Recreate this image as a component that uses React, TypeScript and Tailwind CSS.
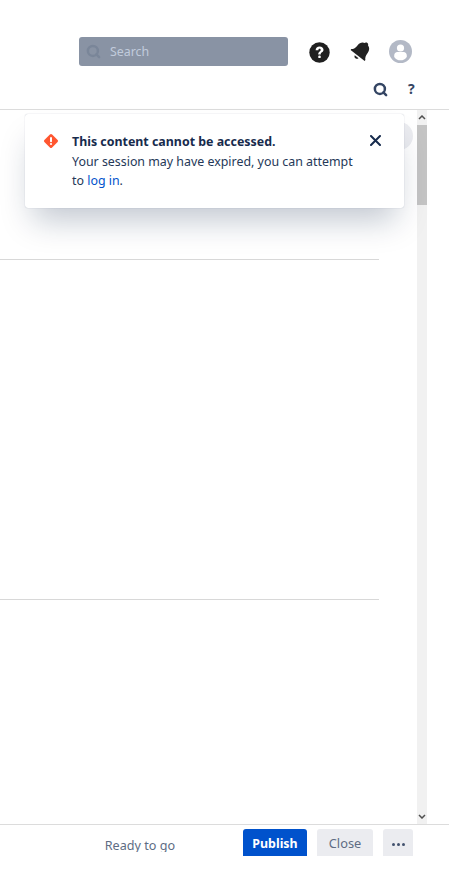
import { Search } from 'lucide-react';

function HelpIcon() {
  return (
    <svg width="21" height="21" viewBox="0 0 21 21">
      <circle cx="10.5" cy="10.5" r="10.2" fill="#1f1f1f" />
      <path d="M6.6 8.2c0-2.4 1.6-3.8 4-3.8s3.9 1.3 3.9 3.3c0 1.5-.8 2.2-1.8 2.9-.7.5-1 .9-1 1.8H9.2c0-1.6.5-2.3 1.5-3 .7-.5 1-.9 1-1.5 0-.7-.5-1.1-1.1-1.1-.7 0-1.2.5-1.2 1.4z" fill="#fff" />
      <rect x="9.2" y="13.5" width="2.6" height="2.6" rx="1.2" fill="#fff" />
    </svg>
  );
}

function BellIcon() {
  return (
    <svg width="24" height="24" viewBox="0 0 24 24">
      <g transform="rotate(38 12 12) translate(-1.5 -1.5) scale(1.13)" fill="#222">
        <path d="M11.5 2.2c.9 0 1.5.5 1.7 1.3 2.6.7 3.9 2.8 3.9 5.5 0 3 .7 4.8 2.3 6.2v1H3.6v-1c1.6-1.4 2.3-3.2 2.3-6.2 0-2.7 1.3-4.8 3.9-5.5.2-.8.8-1.3 1.7-1.3z" />
        <path d="M9.4 17.6h4.2c-.2 1.1-1 1.8-2.1 1.8s-1.9-.7-2.1-1.8z" />
      </g>
    </svg>
  );
}

function AvatarIcon() {
  return (
    <svg width="23" height="23" viewBox="0 0 23 23">
      <circle cx="11.5" cy="11.5" r="11.5" fill="#b3b9c6" />
      <circle cx="11.5" cy="8" r="3.6" fill="#fff" />
      <path d="M5.2 15.5c0-2 1.4-3.4 3.2-3.4h6.2c1.8 0 3.2 1.4 3.2 3.4v1.4c-1.5 2.2-3.6 3.4-6.3 3.4s-4.8-1.2-6.3-3.4z" fill="#fff" />
    </svg>
  );
}

function ErrorIcon() {
  return (
    <svg width="16" height="16" viewBox="0 0 16 16">
      <path d="M6.9 1.4a1.6 1.6 0 0 1 2.2 0l5.5 5.5a1.6 1.6 0 0 1 0 2.2l-5.5 5.5a1.6 1.6 0 0 1-2.2 0L1.4 9.1a1.6 1.6 0 0 1 0-2.2z" fill="#ff5630" />
      <rect x="7" y="4" width="2" height="5.2" rx="1" fill="#fff" />
      <circle cx="8" cy="11" r="1.1" fill="#fff" />
    </svg>
  );
}

function CloseIcon() {
  return (
    <svg width="11" height="11" viewBox="0 0 11 11">
      <path d="M1 1l9 9M10 1l-9 9" stroke="#172b4d" strokeWidth="2" strokeLinecap="round" />
    </svg>
  );
}

export default function App() {
  return (
    <div className="flex h-[875px] w-[449px] flex-col overflow-hidden bg-white font-['Noto_Sans',sans-serif] text-[12.4px] text-[#172b4d]">
      {/* top bar */}
      <div className="h-[110px] shrink-0 border-b border-[#dcdcdc]">
        <div className="flex h-[79px] items-end pb-[13px] pl-[79px]">
          <div className="flex h-[29px] w-[209px] items-center rounded-[3px] bg-[#8993a4] pl-[7px]">
            <Search size={15} strokeWidth={4} className="text-[#7a8699]" />
            <span className="ml-[9px] pt-[2px] text-[12.4px] text-[#c1cbdc]">Search</span>
          </div>
          <div className="ml-[21px] mb-[3px]"><HelpIcon /></div>
          <div className="ml-[19px] mb-[2px]"><BellIcon /></div>
          <div className="ml-[16px] mb-[3px]"><AvatarIcon /></div>
        </div>
        <div className="flex items-center pl-[373px]">
          <Search size={15} strokeWidth={4} className="text-[#344563]" />
          <span className="ml-[20px] text-[14px] font-bold leading-[20px] text-[#344563]">?</span>
        </div>
      </div>

      {/* content */}
      <div className="relative flex min-h-0 flex-1">
        <div className="w-[417px]">
          <div className="mt-[149px] w-[379px] border-t border-[#d8d8d8]" />
          <div className="mt-[339px] w-[379px] border-t border-[#d8d8d8]" />
        </div>

        {/* scrollbar */}
        <div className="flex w-[10px] flex-col justify-between bg-[#f1f1f1]">
          <div>
            <div className="flex h-[15px] items-center justify-center">
              <svg width="8" height="5" viewBox="0 0 8 5"><path d="M1 4l3-3 3 3" fill="none" stroke="#505050" strokeWidth="1.5" /></svg>
            </div>
            <div className="h-[80px] bg-[#c4c4c4]" />
          </div>
          <div className="flex h-[15px] items-center justify-center">
            <svg width="8" height="5" viewBox="0 0 8 5"><path d="M1 1l3 3 3-3" fill="none" stroke="#505050" strokeWidth="1.5" /></svg>
          </div>
        </div>

        {/* circle behind flag */}
        <div className="absolute left-[385px] top-[12px] h-[28px] w-[28px] rounded-full bg-[#ebecf0]" />

        {/* error flag */}
        <div className="absolute left-[25px] top-[4px] flex h-[94px] w-[379px] rounded-[3px] bg-white pl-[18px] pr-[23px] pt-[18px] shadow-[0_20px_32px_-8px_rgba(9,30,66,0.25),0_0_1px_rgba(9,30,66,0.31)]">
          <div className="mt-[1px] shrink-0"><ErrorIcon /></div>
          <div className="ml-[13px] w-[290px] shrink-0 leading-[19.5px]">
            <div className="font-bold">This content cannot be accessed.</div>
            <div className="text-[#253858]">
              Your session may have expired, you can attempt to <span className="text-[#0052cc]">log in</span>.
            </div>
          </div>
          <div className="ml-auto mt-[3px] shrink-0"><CloseIcon /></div>
        </div>
      </div>

      {/* footer */}
      <div className="h-[51px] shrink-0 border-t border-[#dcdcdc]">
        <div className="flex h-[31px] w-[413px] items-end justify-end overflow-hidden">
          <span className="mb-[4px] mr-[68px] block h-[15px] overflow-hidden text-[12.6px] leading-[17px] text-[#5e6c84]">Ready to go</span>
          <div className="flex h-[27px] w-[64px] items-center justify-center rounded-t-[3px] bg-[#0052cc] pt-[3px] font-bold text-white">Publish</div>
          <div className="ml-[10px] flex h-[27px] w-[56px] items-center justify-center rounded-t-[3px] bg-[#ebecf0] pt-[3px] text-[12.8px] text-[#5e6c84]">Close</div>
          <div className="ml-[10px] flex h-[27px] w-[30px] items-center justify-center gap-[2px] rounded-t-[3px] bg-[#ebecf0] pt-[3px]">
            <span className="h-[3px] w-[3px] rounded-full bg-[#42526e]" />
            <span className="h-[3px] w-[3px] rounded-full bg-[#42526e]" />
            <span className="h-[3px] w-[3px] rounded-full bg-[#42526e]" />
          </div>
        </div>
      </div>
    </div>
  );
}
